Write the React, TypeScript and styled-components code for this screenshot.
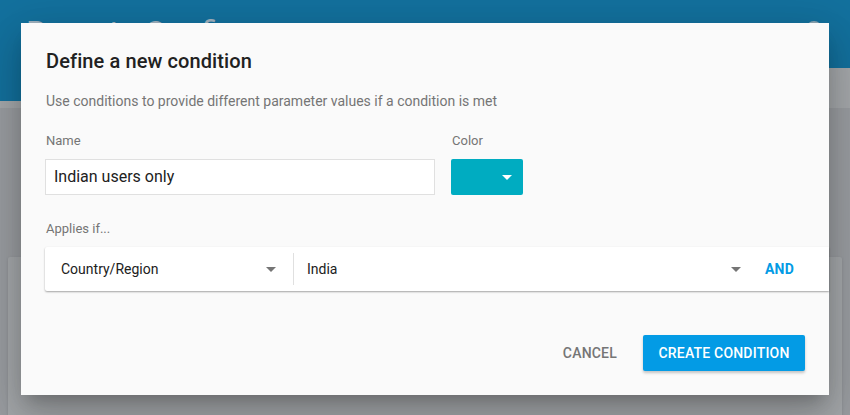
import React from "react";
import styled, { createGlobalStyle } from "styled-components";

const Global = createGlobalStyle`
  html, body { margin: 0; padding: 0; }
  body { font-family: Roboto, "Noto Sans", "Liberation Sans", sans-serif; background: #9c9fa3; }
  * { box-sizing: border-box; }
`;

const Page = styled.div`
  position: relative;
  width: 850px;
  height: 415px;
  overflow: hidden;
  background: #9b9ea2;
  display: flex;
  flex-direction: column;
`;

const AppHeader = styled.header`
  height: 68px;
  background: #13719e;
  display: flex;
  align-items: flex-start;
  justify-content: space-between;
  padding: 13px 26px 0 26px;
  flex-shrink: 0;
`;

const HeaderTitle = styled.div`
  font-size: 32px;
  line-height: 38px;
  color: #a2b4c1;
  font-weight: 400;
`;

const Avatar = styled.div`
  width: 16px;
  height: 16px;
  border-radius: 50%;
  background: #8fa7b5;
  margin-top: 8px;
  margin-right: 2px;
`;

const SubBar = styled.div`
  height: 40px;
  display: flex;
  background: #a6a9ac;
  flex-shrink: 0;
`;

const SubBarTab = styled.div`
  width: 120px;
  height: 33px;
  background: #13719e;
`;

const Content = styled.div`
  flex: 1;
  padding: 149px 8px 0 8px;
`;

const BgCard = styled.div`
  height: 200px;
  background: #a6a9ac;
  border-radius: 2px;
  box-shadow: 0 1px 3px rgba(0, 0, 0, 0.12);
`;

const Dialog = styled.div`
  position: absolute;
  left: 21px;
  top: 23px;
  width: 808px;
  height: 372px;
  background: #fafafa;
  padding: 49px 0 0 24px;
  display: flex;
  flex-direction: column;
  box-shadow: 0 11px 15px -7px rgba(0, 0, 0, 0.2), 0 24px 38px 3px rgba(0, 0, 0, 0.14),
    0 9px 46px 8px rgba(0, 0, 0, 0.12);
`;

const Title = styled.h2`
  margin: -23px 0 0 1px;
  font-size: 20px;
  line-height: 24px;
  font-weight: 500;
  color: #212121;
  letter-spacing: 0.1px;
`;

const Subtitle = styled.p`
  margin: 18px 0 0 1px;
  font-size: 14px;
  line-height: 20px;
  color: #757575;
`;

const FieldRow = styled.div`
  display: flex;
  gap: 16px;
  margin-top: 22px;
`;

const Field = styled.div`
  display: flex;
  flex-direction: column;
`;

const Label = styled.label`
  font-size: 13px;
  line-height: 16px;
  color: #757575;
  margin-left: 1px;
  height: 26px;
`;

const TextInput = styled.div`
  width: 390px;
  height: 36px;
  background: #fff;
  border: 1px solid #e0e0e0;
  display: flex;
  align-items: center;
  padding: 0 0 1px 8px;
  font-size: 16px;
  color: #212121;
`;

const ColorButton = styled.div<{ $color: string }>`
  width: 72px;
  height: 36px;
  border-radius: 2px;
  background: ${(p) => p.$color};
  display: flex;
  align-items: center;
  justify-content: flex-end;
  padding-right: 11px;
`;

const Caret = styled.span<{ $color: string }>`
  display: block;
  width: 0;
  height: 0;
  border-left: 5px solid transparent;
  border-right: 5px solid transparent;
  border-top: 5px solid ${(p) => p.$color};
`;

const AppliesLabel = styled(Label)`
  margin-top: 26px;
  height: 26px;
`;

const ConditionCard = styled.div`
  width: 784px;
  height: 44px;
  background: #fff;
  box-shadow: 0 1px 2px rgba(0, 0, 0, 0.35);
  border-radius: 2px 0 0 2px;
  display: flex;
  align-items: center;
`;

const Select = styled.div<{ $width: number; $pad: number }>`
  width: ${(p) => p.$width}px;
  height: 100%;
  display: flex;
  align-items: center;
  justify-content: space-between;
  padding: 0 17px 0 ${(p) => p.$pad}px;
  font-size: 14px;
  color: #212121;
`;

const Divider = styled.div`
  width: 1px;
  height: 32px;
  background: #e0e0e0;
`;

const TextButton = styled.button<{ $color: string }>`
  border: none;
  background: transparent;
  padding: 0;
  font-family: inherit;
  font-size: 14px;
  font-weight: 500;
  letter-spacing: 0.2px;
  color: ${(p) => p.$color};
  text-transform: uppercase;
  cursor: pointer;
`;

const AndButton = styled(TextButton)`
  margin-left: 7px;
  font-weight: 700;
`;

const Actions = styled.div`
  display: flex;
  justify-content: flex-end;
  align-items: center;
  gap: 26px;
  margin-top: 44px;
  padding-right: 24px;
`;

const RaisedButton = styled.button`
  height: 36px;
  width: 162px;
  border: none;
  border-radius: 2px;
  background: #039be5;
  color: #fff;
  font-family: inherit;
  font-size: 14px;
  font-weight: 500;
  letter-spacing: 0.2px;
  box-shadow: 0 2px 3px rgba(0, 0, 0, 0.22);
`;

export default function App() {
  return (
    <>
      <Global />
      <Page>
        <AppHeader>
          <HeaderTitle>Remote Config</HeaderTitle>
          <Avatar />
        </AppHeader>
        <SubBar>
          <SubBarTab />
        </SubBar>
        <Content>
          <BgCard />
        </Content>
        <Dialog>
          <Title>Define a new condition</Title>
          <Subtitle>Use conditions to provide different parameter values if a condition is met</Subtitle>
          <FieldRow>
            <Field>
              <Label>Name</Label>
              <TextInput>Indian users only</TextInput>
            </Field>
            <Field>
              <Label>Color</Label>
              <ColorButton $color="#00acc1">
                <Caret $color="#ffffff" />
              </ColorButton>
            </Field>
          </FieldRow>
          <AppliesLabel>Applies if...</AppliesLabel>
          <ConditionCard>
            <Select $width={248} $pad={16}>
              Country/Region
              <Caret $color="#757575" />
            </Select>
            <Divider />
            <Select $width={464} $pad={13}>
              India
              <Caret $color="#757575" />
            </Select>
            <AndButton $color="#039be5">And</AndButton>
          </ConditionCard>
          <Actions>
            <TextButton $color="#757575">Cancel</TextButton>
            <RaisedButton>CREATE CONDITION</RaisedButton>
          </Actions>
        </Dialog>
      </Page>
    </>
  );
}
